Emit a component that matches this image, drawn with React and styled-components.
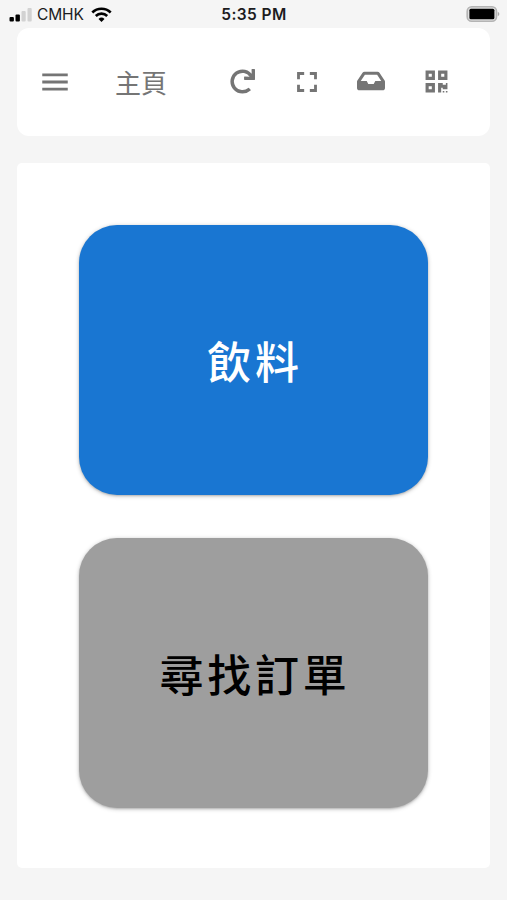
import React from "react";
import styled, { createGlobalStyle } from "styled-components";
import { FaInbox, FaQrcode, FaRedo } from "react-icons/fa";
import { MdFullscreen, MdMenu } from "react-icons/md";

const GlobalStyle = createGlobalStyle`
  * {
    box-sizing: border-box;
  }

  body {
    margin: 0;
    background: #f5f5f5;
    font-family: Inter, "Noto Sans CJK TC", sans-serif;
  }
`;

const Page = styled.div`
  height: 900px;
  padding: 0 17px;
  overflow: hidden;
`;

const StatusBar = styled.div`
  display: grid;
  grid-template-columns: 1fr auto 1fr;
  align-items: center;
  height: 28px;
  margin: 0 -10px 0 -8px;
  color: #1c1c1e;
  line-height: 28px;
`;

const Carrier = styled.div`
  display: flex;
  align-items: center;
  height: 28px;
  padding-top: 2px;
  font-size: 15.5px;

  span {
    width: 49px;
    margin: 0 5px;
    letter-spacing: -0.1px;
    white-space: nowrap;
  }

  svg {
    margin-bottom: 1px;
  }
`;

const Time = styled.div`
  height: 28px;
  padding: 1px 1px 0 0;
  font-size: 15.5px;
  font-weight: 600;
  letter-spacing: 0.4px;
`;

const Battery = styled.svg`
  justify-self: end;
`;

const Header = styled.header`
  display: flex;
  align-items: center;
  height: 108px;
  padding-left: 21px;
  background: #fff;
  border-radius: 12px;
  color: #757575;
`;

const IconButton = styled.button`
  display: flex;
  align-items: center;
  justify-content: center;
  width: ${({ $width }) => $width}px;
  height: 50px;
  padding: 0 0 ${({ $lift }) => $lift || 0}px;
  border: 0;
  background: none;
  color: inherit;
  font-size: ${({ $size }) => $size}px;
`;

const Title = styled.h1`
  width: 106px;
  margin: 0 0 0 43px;
  font-family: "Noto Sans CJK TC", sans-serif;
  font-size: 26px;
  font-weight: 400;
  line-height: 50px;
`;

const Content = styled.main`
  display: flex;
  flex-direction: column;
  align-items: center;
  gap: 43px;
  height: 705px;
  margin-top: 27px;
  padding-top: 62px;
  background: #fff;
  border-radius: 5px;
`;

const Tile = styled.button`
  width: 349px;
  height: 270px;
  padding: 0 0 0 3px;
  border: 0;
  border-radius: 38px;
  background: ${({ $primary }) => ($primary ? "#1976d2" : "#9e9e9e")};
  color: ${({ $primary }) => ($primary ? "#fff" : "#000")};
  box-shadow: 0 1px 4px rgba(0, 0, 0, 0.25), 0 1px 2px rgba(0, 0, 0, 0.14);
  font-family: "Noto Sans CJK TC", sans-serif;
  font-size: 44px;
  font-weight: 500;
  letter-spacing: 3.8px;
`;

const SignalIcon = () => (
  <svg width="23" height="16" viewBox="0 0 23 16">
    <rect x="0.5" y="10" width="4.4" height="4.5" rx="1" fill="#000" />
    <rect x="6.5" y="7.5" width="4.4" height="7" rx="1" fill="#000" />
    <rect x="12.5" y="4" width="4.2" height="10.5" rx="1" fill="#d2d2d2" />
    <rect x="18.5" y="1" width="4.2" height="13.5" rx="1" fill="#d2d2d2" />
  </svg>
);

const WifiIcon = () => (
  <svg width="21" height="16" viewBox="0 0 21 16" fill="none" stroke="#000" strokeWidth="2.6">
    <path d="M1.3 5.5a13 13 0 0 1 18.4 0" />
    <path d="M4.8 9a8 8 0 0 1 11.4 0" />
    <path d="M10.5 15l-3-3.1a4.3 4.3 0 0 1 6 0z" fill="#000" stroke="none" />
  </svg>
);

const Status = () => (
  <StatusBar>
    <Carrier>
      <SignalIcon />
      <span>CMHK</span>
      <WifiIcon />
    </Carrier>
    <Time>5:35 PM</Time>
    <Battery width="34" height="18" viewBox="0 0 34 18">
      <rect x="1.2" y="1.7" width="29.3" height="14.5" rx="4.5" fill="#e0e0e0" stroke="#b4b4b4" strokeWidth="1.6" />
      <rect x="3.4" y="3.8" width="25" height="10.4" rx="1.5" fill="#000" />
      <path d="M31.8 7c2 .5 2 3.5 0 4z" fill="#aaa" />
    </Battery>
  </StatusBar>
);

const App = () => {
  return (
    <>
      <GlobalStyle />
      <Page>
        <Status />
        <Header>
          <IconButton type="button" aria-label="Menu" $width={34} $size={34}>
            <MdMenu />
          </IconButton>
          <Title>主頁</Title>
          <IconButton type="button" aria-label="Refresh" $width={43} $size={25} $lift={2}>
            <FaRedo />
          </IconButton>
          <IconButton type="button" aria-label="Fullscreen" $width={86} $size={34}>
            <MdFullscreen />
          </IconButton>
          <IconButton type="button" aria-label="Inbox" $width={42} $size={28} $lift={2}>
            <FaInbox />
          </IconButton>
          <IconButton type="button" aria-label="QR code" $width={88} $size={25} $lift={2}>
            <FaQrcode />
          </IconButton>
        </Header>
        <Content>
          <Tile type="button" $primary>
            飲料
          </Tile>
          <Tile type="button">尋找訂單</Tile>
        </Content>
      </Page>
    </>
  );
};

export default App;
